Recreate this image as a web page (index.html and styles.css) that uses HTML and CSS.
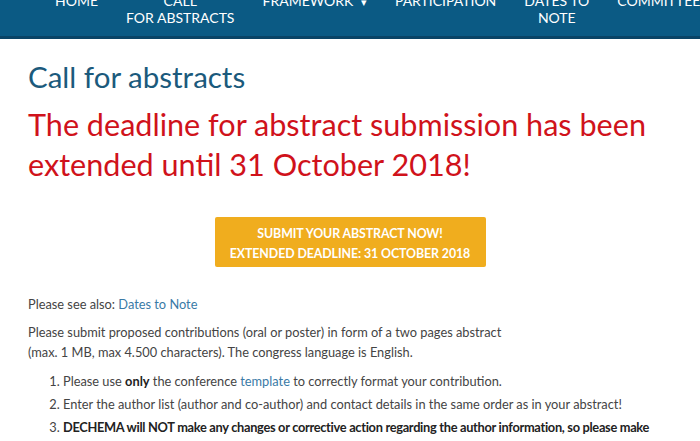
FILE: index.html
```html
<!DOCTYPE html>
<html lang="en">
<head>
<meta charset="utf-8">
<title>Call for abstracts</title>
<link rel="stylesheet" href="styles.css">
</head>
<body>
<header class="topbar">
  <ul class="menu">
    <li class="menu-item">HOME</li>
    <li class="menu-item">CALL<br>FOR ABSTRACTS</li>
    <li class="menu-item">FRAMEWORK <span class="caret">&#9662;</span></li>
    <li class="menu-item">PARTICIPATION</li>
    <li class="menu-item">DATES TO<br>NOTE</li>
    <li class="menu-item">COMMITTEES</li>
  </ul>
</header>
<main class="content">
  <h1 class="page-title">Call for abstracts</h1>
  <h2 class="notice">The deadline for abstract submission has been extended until 31 October 2018!</h2>
  <div class="cta-wrap">
    <a class="cta">SUBMIT YOUR ABSTRACT NOW!<br>EXTENDED DEADLINE: 31 OCTOBER 2018</a>
  </div>
  <p class="see-also">Please see also: <a class="link">Dates to Note</a></p>
  <p class="intro">Please submit proposed contributions (oral or poster) in form of a two pages abstract<br>(max. 1 MB, max 4.500 characters). The congress language is English.</p>
  <ol class="rules">
    <li>Please use <strong>only</strong> the conference <a class="link">template</a> to correctly format your contribution.</li>
    <li>Enter the author list (author and co-author) and contact details in the same order as in your abstract!</li>
    <li><strong class="tight">DECHEMA will NOT make any changes or corrective action regarding the author information, so please make sure to check your data carefully.</strong></li>
  </ol>
</main>
</body>
</html>
```
FILE: styles.css
```css
* { box-sizing: border-box; }
html, body { margin: 0; padding: 0; background: #ffffff; }
body {
  font-family: "Lato", "Liberation Sans", sans-serif;
  color: #444444;
  overflow: hidden;
}
.topbar {
  height: 39px;
  background: #0b5a84;
  border-bottom: 3px solid #0a4466;
  overflow: hidden;
}
.menu {
  list-style: none;
  margin: -8px 0 0 0;
  padding: 0 0 0 55px;
  display: flex;
  gap: 28px;
  align-items: flex-start;
}
.menu-item {
  color: #ffffff;
  font-size: 14px;
  line-height: 17px;
  text-align: center;
  white-space: nowrap;
}
.caret { font-size: 11px; margin-left: 4px; }
.content { padding: 0 28px; }
.page-title {
  margin: 20px 0 0 0;
  font-size: 29.5px;
  line-height: 36px;
  font-weight: 400;
  color: #1b5a7c;
}
.notice {
  margin: 10px 0 0 0;
  font-size: 30.6px;
  line-height: 40px;
  font-weight: 400;
  color: #d0121b;
}
.cta-wrap {
  display: flex;
  justify-content: center;
  margin-top: 32px;
}
.cta {
  display: block;
  width: 271px;
  height: 50px;
  padding-top: 7px;
  background: #f0ad1e;
  border-radius: 2px;
  color: #ffffff;
  font-weight: 700;
  font-size: 12.4px;
  line-height: 20px;
  text-align: center;
  letter-spacing: -0.1px;
}
.see-also, .intro {
  font-size: 12.8px;
  line-height: 20px;
  margin: 0;
}
.see-also { margin-top: 27px; }
.intro { margin-top: 8px; }
.link { color: #3a7aa6; }
.rules {
  margin: 8px 0 0 0;
  padding-left: 35px;
  font-size: 12.8px;
  line-height: 23px;
}
.rules strong { color: #222222; }
.rules .tight { letter-spacing: -0.3px; }
```
